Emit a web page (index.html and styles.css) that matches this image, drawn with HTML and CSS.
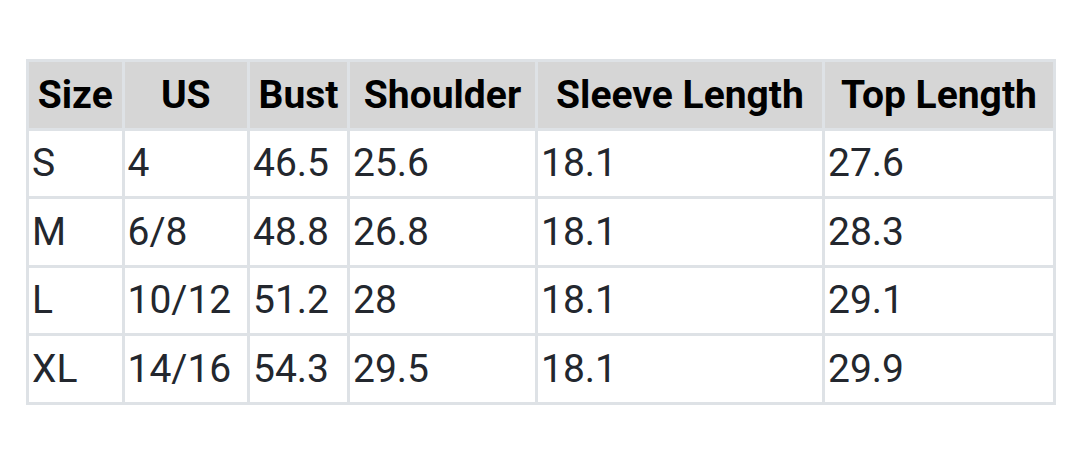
FILE: index.html
```html
<!DOCTYPE html>
<html>
<head>
<meta charset="utf-8">
<link rel="stylesheet" href="styles.css">
</head>
<body>
<div class="page">
  <div class="size-table">
    <div class="cell head">Size</div>
    <div class="cell head">US</div>
    <div class="cell head">Bust</div>
    <div class="cell head">Shoulder</div>
    <div class="cell head">Sleeve Length</div>
    <div class="cell head">Top Length</div>

    <div class="cell">S</div>
    <div class="cell">4</div>
    <div class="cell">46.5</div>
    <div class="cell">25.6</div>
    <div class="cell">18.1</div>
    <div class="cell">27.6</div>

    <div class="cell">M</div>
    <div class="cell">6/8</div>
    <div class="cell">48.8</div>
    <div class="cell">26.8</div>
    <div class="cell">18.1</div>
    <div class="cell">28.3</div>

    <div class="cell">L</div>
    <div class="cell">10/12</div>
    <div class="cell">51.2</div>
    <div class="cell">28</div>
    <div class="cell">18.1</div>
    <div class="cell">29.1</div>

    <div class="cell">XL</div>
    <div class="cell">14/16</div>
    <div class="cell">54.3</div>
    <div class="cell">29.5</div>
    <div class="cell">18.1</div>
    <div class="cell">29.9</div>
  </div>
</div>
</body>
</html>
```
FILE: styles.css
```css
html, body {
  margin: 0;
  padding: 0;
  background: #ffffff;
}

.page {
  padding: 59px 0 0 26px;
}

.size-table {
  display: grid;
  grid-template-columns: 92.5px 122.5px 97px 185px 284px 228px;
  grid-auto-rows: 65.5px;
  gap: 3px;
  padding: 3px;
  width: fit-content;
  background: #dee2e6;
  font-family: Roboto, "Liberation Sans", sans-serif;
  font-size: 39px;
  color: #23272e;
}

.cell {
  background: #ffffff;
  display: flex;
  align-items: center;
  padding: 0 0 0 3px;
  white-space: nowrap;
}

.cell.head {
  background: #d6d6d6;
  color: #000000;
  font-weight: 700;
  justify-content: center;
  padding: 0;
}
```
